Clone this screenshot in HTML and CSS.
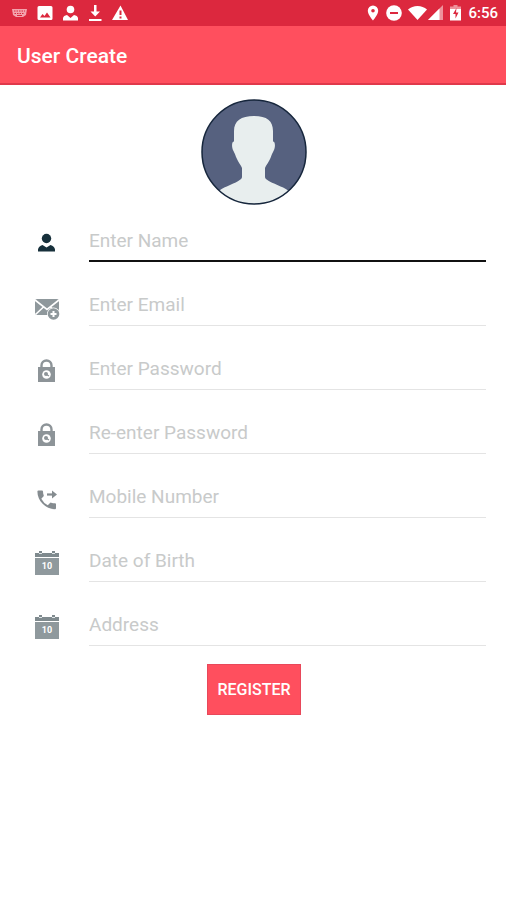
FILE: index.html
```html
<!DOCTYPE html>
<html lang="en">
<head>
    <meta charset="UTF-8">
    <meta name="viewport" content="width=device-width, initial-scale=1">
    <title>User Create</title>
    <link rel="stylesheet" href="styles.css">
</head>
<body>
    <div class="status-bar">
        <div class="status-left">
            <svg width="16" height="16" viewBox="0 0 16 16">
                <path d="M0 4h15l-1 6-3 2H4L1 10z" fill="#f3a3ad"/>
                <path d="M2 6h11M2.5 8.5h10" stroke="#dc283e" stroke-dasharray="1.5 1"/>
                <path d="M5 10.5h5" stroke="#dc283e"/>
            </svg>
            <svg width="16" height="16" viewBox="0 0 16 16">
                <path fill-rule="evenodd" fill="#fff" d="M2 1h12q1.500 0 1.500 1.500v11Q15.500 15 14 15H2Q.5 15 .5 13.500v-11Q.5 1 2 1zM3 12.500h10.500L10 7.500l-2.500 3.500L5.500 9z"/>
            </svg>
            <svg width="16" height="16" viewBox="0 0 16 16">
                <circle cx="8.500" cy="4.500" r="3.800" fill="#fff"/>
                <path d="M1 15.500v-2.500q.5-2.500 4-3l3.500 3 3.500-3q3.500.5 4 3v2.500z" fill="#fff"/>
            </svg>
            <svg width="16" height="16" viewBox="0 0 16 16">
                <path d="M7 0h2.500v6.500H13L8.250 11.500 3.500 6.500H7zM2 14h12.500v2H2z" fill="#fff"/>
            </svg>
            <svg width="16" height="16" viewBox="0 0 16 16">
                <path fill-rule="evenodd" fill="#fff" d="M8.500.5L16 15H0zM7.500 5.500v4.500h2V5.500zM7.500 11.500v2h2v-2z"/>
            </svg>
        </div>
        <div class="status-right">
            <svg width="12" height="16" viewBox="0 0 12 16">
                <path fill-rule="evenodd" fill="#fff" d="M6 .5a5.200 5.200 0 0 1 5.200 5.200C11.200 9.500 6 15.500 6 15.500S.8 9.500.8 5.700A5.200 5.200 0 0 1 6 .5zM6 4a1.800 1.800 0 1 0 0 3.600A1.800 1.800 0 0 0 6 4z"/>
            </svg>
            <svg width="16" height="16" viewBox="0 0 16 16">
                <circle cx="8" cy="8" r="7.800" fill="#fff"/>
                <path d="M4 8h8" stroke="#dc283e" stroke-width="2"/>
            </svg>
            <svg class="wifi" width="19" height="16" viewBox="0 0 19 16">
                <path d="M0 4.500Q4 1 9.500 1T19 4.500L9.500 15z" fill="#fff"/>
            </svg>
            <svg class="signal" width="15" height="16" viewBox="0 0 15 16">
                <path d="M15 0v15H0z" fill="#ee929c"/>
                <path d="M11.500 3.500V15H0z" fill="#fff"/>
            </svg>
            <svg width="11" height="16" viewBox="0 0 11 16">
                <path d="M3.500 0h4v1.500H11V5H0V1.500h3.500z" fill="#ee929c"/>
                <path d="M0 4h11v11.500H0z" fill="#fff"/>
                <path d="M6.500 3L3 9h2.500v4.500L8.500 7.500H6z" fill="#dc283e"/>
            </svg>
            <span class="clock">6:56</span>
        </div>
    </div>

    <header class="app-bar">
        <h1>User Create</h1>
    </header>

    <main>
        <svg class="avatar" viewBox="0 0 106 106" role="img" aria-label="Profile picture">
            <clipPath id="avatar-clip"><circle cx="53" cy="53" r="52"/></clipPath>
            <circle cx="53" cy="53" r="52" fill="#56617f"/>
            <path clip-path="url(#avatar-clip)" fill="#e8eeee" d="M53 17c13 0 19 5 19 15v10.500c2.500 0 2.500 6 .5 9.500-1 2-1.500 3-3 7-1.500 4-4.500 7-5.500 10v9c0 5 22 10 24.500 15V106H17V93c3-5 24-10 24-15v-9c-1-3-4-6-5.500-10-1.500-4-2-5-3-7-2-3.500-2-9.500.5-9.500V32c0-10 7-15 20-15z"/>
            <circle cx="53" cy="53" r="52" fill="none" stroke="#16263c" stroke-width="1.5"/>
        </svg>

        <form class="register-form">
            <div class="field field-active">
                <svg class="field-icon" viewBox="0 0 26 26">
                    <circle cx="12.500" cy="8.500" r="4.700" fill="#17303b"/>
                    <path d="M4 21.500v-2q.5-3.500 4.500-4.500l4 2.500 4-2.500q4 1 4.500 4.500v2z" fill="#17303b"/>
                </svg>
                <input type="text" aria-label="Enter Name" placeholder="Enter Name">
            </div>
            <div class="field">
                <svg class="field-icon" viewBox="0 0 26 26">
                    <rect x="1" y="5" width="24" height="16" rx="2" fill="#8f989c"/>
                    <path d="M1 6l12 9.500L25 6M1.500 20.500l8-7.500M24.500 20.500l-8-7.500" fill="none" stroke="#fff" stroke-width="1.6"/>
                    <circle cx="19.500" cy="20" r="6.500" fill="#fff"/>
                    <circle cx="19.500" cy="20" r="5.800" fill="#8f989c"/>
                    <path d="M19.500 17v6M16.500 20h6" stroke="#fff" stroke-width="2"/>
                </svg>
                <input type="email" aria-label="Enter Email" placeholder="Enter Email">
            </div>
            <div class="field">
                <svg class="field-icon" viewBox="0 0 26 26">
                    <path d="M7.500 11V7.500a5 5 0 0 1 10 0V11" fill="none" stroke="#8d9498" stroke-width="2.4"/>
                    <path d="M4 9h17v15H4z" fill="#8d9498"/>
                    <circle cx="12.500" cy="16.500" r="4.300" fill="#fff"/>
                    <circle cx="12" cy="16" r="2" fill="#8d9498"/>
                    <path d="M12.500 16.500l2.500 1.500" stroke="#8d9498" stroke-width="1.3"/>
                </svg>
                <input type="password" aria-label="Enter Password" placeholder="Enter Password">
            </div>
            <div class="field">
                <svg class="field-icon" viewBox="0 0 26 26">
                    <path d="M7.500 11V7.500a5 5 0 0 1 10 0V11" fill="none" stroke="#8d9498" stroke-width="2.4"/>
                    <path d="M4 9h17v15H4z" fill="#8d9498"/>
                    <circle cx="12.500" cy="16.500" r="4.300" fill="#fff"/>
                    <circle cx="12" cy="16" r="2" fill="#8d9498"/>
                    <path d="M12.500 16.500l2.500 1.500" stroke="#8d9498" stroke-width="1.3"/>
                </svg>
                <input type="password" aria-label="Re-enter Password" placeholder="Re-enter Password">
            </div>
            <div class="field">
                <svg class="field-icon" viewBox="0 0 26 26">
                    <path d="M4.500 4.500H8q1 0 1 1 0 2 .7 3.800.3.700-.3 1.200L7.300 12.700q2.200 4.300 6.500 6.500l2.200-2.200q.5-.6 1.200-.3 1.800.6 3.800.6 1 0 1 1V22q0 1.200-1 1.200C11.500 23.200 3.400 15 3.400 5.600q0-1.100 1.100-1.100z" fill="#858c90"/>
                    <path d="M13 8.500h6" stroke="#858c90" stroke-width="2.2"/>
                    <path d="M18 4.500l5 4-5 4z" fill="#858c90"/>
                </svg>
                <input type="tel" aria-label="Mobile Number" placeholder="Mobile Number">
            </div>
            <div class="field">
                <svg class="field-icon" viewBox="0 0 26 26">
                    <path d="M1 3h4V1h3v2h10V1h3v2h4v4H1z" fill="#7f8a8e"/>
                    <path d="M1 8h24v17H1z" fill="#8f999d"/>
                    <path d="M5 3.500h3M18 3.500h3" stroke="#dfe5e7"/>
                    <text x="13" y="19" text-anchor="middle" class="calendar-day">10</text>
                </svg>
                <input type="text" aria-label="Date of Birth" placeholder="Date of Birth">
            </div>
            <div class="field">
                <svg class="field-icon" viewBox="0 0 26 26">
                    <path d="M1 3h4V1h3v2h10V1h3v2h4v4H1z" fill="#7f8a8e"/>
                    <path d="M1 8h24v17H1z" fill="#8f999d"/>
                    <path d="M5 3.500h3M18 3.500h3" stroke="#dfe5e7"/>
                    <text x="13" y="19" text-anchor="middle" class="calendar-day">10</text>
                </svg>
                <input type="text" aria-label="Address" placeholder="Address">
            </div>
            <button type="button" class="register-btn">REGISTER</button>
        </form>
    </main>
</body>
</html>
```

FILE: styles.css
```css
* {
    box-sizing: border-box;
}

body {
    margin: 0;
    min-height: 100vh;
    background: #fff;
    font-family: Roboto, "Liberation Sans", sans-serif;
}

/* status bar */
.status-bar {
    display: flex;
    justify-content: space-between;
    align-items: center;
    height: 26px;
    padding: 0 8px 0 12px;
    background: #dc283e;
}

.status-left,
.status-right {
    display: flex;
    align-items: center;
}

.status-left {
    gap: 9px;
}

.status-right {
    gap: 7px;
}

.wifi {
    margin-left: -1px;
}

.signal {
    margin-left: -6px;
}

.clock {
    color: #fff;
    font-size: 15px;
    font-weight: 500;
    line-height: 20px;
}

/* title bar */
.app-bar {
    padding: 18px 17px 14px;
    background: #ff4f5e;
    border-bottom: 2px solid #e0394b;
}

.app-bar h1 {
    margin: 0;
    color: #fff;
    font-size: 21px;
    font-weight: 500;
    line-height: 25px;
}

main {
    display: flex;
    flex-direction: column;
    padding: 14px 20px 20px 34px;
}

.avatar {
    width: 106px;
    height: 106px;
    align-self: center;
    margin-right: 12px;
}

/* form */
.register-form {
    display: flex;
    flex-direction: column;
    gap: 18px;
    padding-top: 11px;
}

.field {
    display: flex;
    align-items: flex-end;
    gap: 29px;
}

.field-icon {
    flex: none;
    width: 26px;
    height: 26px;
    margin-bottom: 6px;
}

.field input {
    flex: 1;
    min-width: 0;
    height: 46px;
    padding: 4px 0 0;
    border: 0;
    border-bottom: 1px solid #e4e4e4;
    border-radius: 0;
    outline: 0;
    background: none;
    color: #222;
    font-family: inherit;
    font-size: 19px;
}

.field input::placeholder {
    color: #c8caca;
    opacity: 1;
}

.field-active input {
    border-bottom: 2px solid #111;
}

.calendar-day {
    fill: #fff;
    font-size: 9px;
    font-weight: 700;
}

.register-btn {
    align-self: center;
    margin-right: 12px;
    padding: 15px 9px;
    border: 1px solid #e8485a;
    background: #ff4f5e;
    color: #fff;
    font-family: inherit;
    font-size: 16px;
    font-weight: 500;
    line-height: 19px;
}
```
